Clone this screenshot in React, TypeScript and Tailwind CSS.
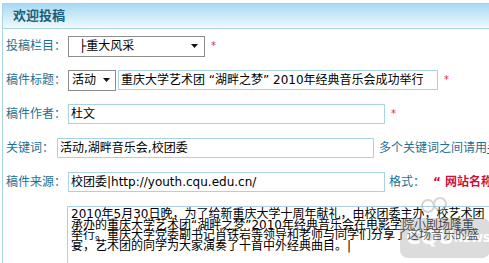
const labelCls = 'text-[12px] text-[#1d6f92] whitespace-nowrap shrink-0';
const boxCls = 'shrink-0 h-[20px] border border-[#a9d3e0] bg-white px-[2px] flex items-center text-[12px] text-black whitespace-nowrap overflow-hidden';

function Star() {
  return <span className="shrink-0 ml-[6px] text-[10px] text-[#e0245a] leading-none">*</span>;
}

function Arrow() {
  return (
    <svg width="7" height="4" viewBox="0 0 7 4" className="shrink-0">
      <path d="M0 0 L7 0 L3.5 4 Z" fill="#111" />
    </svg>
  );
}

function Row({ children }: { children: React.ReactNode }) {
  return <div className="h-[34px] flex items-center pl-[3px] whitespace-nowrap">{children}</div>;
}

const bodyLines = [
  '2010年5月30日晚，为了给新重庆大学十周年献礼，由校团委主办，校艺术团',
  '承办的重庆大学艺术团“湖畔之梦”2010年经典音乐会在电影学院小剧场隆重',
  '举行。重庆大学党委副书记肖铁岩等领导和老师与同学们分享了这场音乐的盛',
  '宴，艺术团的同学为大家演奏了十首中外经典曲目。|',
];

export default function App() {
  return (
    <div
      className="relative w-[489px] h-[263px] overflow-hidden bg-white"
      style={{ fontFamily: '"DejaVu Sans", "Noto Sans CJK SC", sans-serif' }}
    >
      <div className="mt-[3px] ml-[2px] border-l border-t border-[#a9d6e2] h-[260px]">
        {/* header */}
        <div className="h-[25px] border-b border-[#a9d6e2] bg-gradient-to-b from-[#a6daf4] to-[#effafe] flex items-center pl-[10px]">
          <span className="text-[13px] font-bold text-[#1b5f7d]">欢迎投稿</span>
        </div>

        <Row>
          <span className={labelCls}>投稿栏目：</span>
          <div className="shrink-0 ml-[2px] h-[21px] w-[137px] border border-[#8c8c8c] bg-white flex items-center justify-between pl-[10px] pr-[6px] text-[12px] text-black">
            <span>├重大风采</span>
            <Arrow />
          </div>
          <Star />
        </Row>

        <Row>
          <span className={labelCls}>稿件标题：</span>
          <div className="shrink-0 ml-[2px] h-[21px] w-[48px] border border-[#8c8c8c] bg-white flex items-center justify-between pl-[3px] pr-[5px] text-[12px] text-black">
            <span>活动</span>
            <Arrow />
          </div>
          <div className={`${boxCls} ml-[2px] w-[320px]`}>重庆大学艺术团 “湖畔之梦” 2010年经典音乐会成功举行</div>
          <Star />
        </Row>

        <Row>
          <span className={labelCls}>稿件作者：</span>
          <div className={`${boxCls} ml-[2px] w-[317px]`}>杜文</div>
          <Star />
        </Row>

        <Row>
          <span className={labelCls}>关键词：</span>
          <div className={`${boxCls} ml-[3px] w-[317px]`}>活动,湖畔音乐会,校团委</div>
          <span className={`${labelCls} ml-[5px]`}>
            多个关键词之间请用<span className="text-[#d0103a] underline">半角逗号</span>
          </span>
        </Row>

        <Row>
          <span className={labelCls}>稿件来源：</span>
          <div className={`${boxCls} ml-[2px] w-[317px]`}>校团委|http://youth.cqu.edu.cn/</div>
          <span className={`${labelCls} ml-[4px]`}>
            格式：<span className="ml-[8px] text-[#d0103a] font-bold">“ 网站名称|网址”</span>
          </span>
        </Row>

        <div className="mt-[7px] ml-[64px] w-[440px] h-[70px] border border-[#a9d3e0] bg-white pl-[3px] pt-[2px] text-[12px] leading-[10.5px] text-black whitespace-nowrap overflow-hidden">
          {bodyLines.map((l, i) => (
            <div key={i}>{l}</div>
          ))}
        </div>
      </div>

      {/* faded watermark */}
      <svg width="100" height="70" viewBox="0 0 100 70" className="absolute left-[392px] top-[196px] opacity-40 pointer-events-none">
        <circle cx="36" cy="10" r="6" fill="none" stroke="#999" strokeWidth="2" />
        <circle cx="48" cy="8" r="6" fill="none" stroke="#999" strokeWidth="2" />
        <rect x="8" y="22" width="90" height="40" rx="8" fill="#aaa" />
        <text x="14" y="48" fontSize="20" fontWeight="bold" fill="#fff" fontFamily="DejaVu Sans">CQU</text>
        <text x="62" y="46" fontSize="11" fontWeight="bold" fill="#fff" fontFamily="DejaVu Sans">NEWS</text>
      </svg>
    </div>
  );
}
